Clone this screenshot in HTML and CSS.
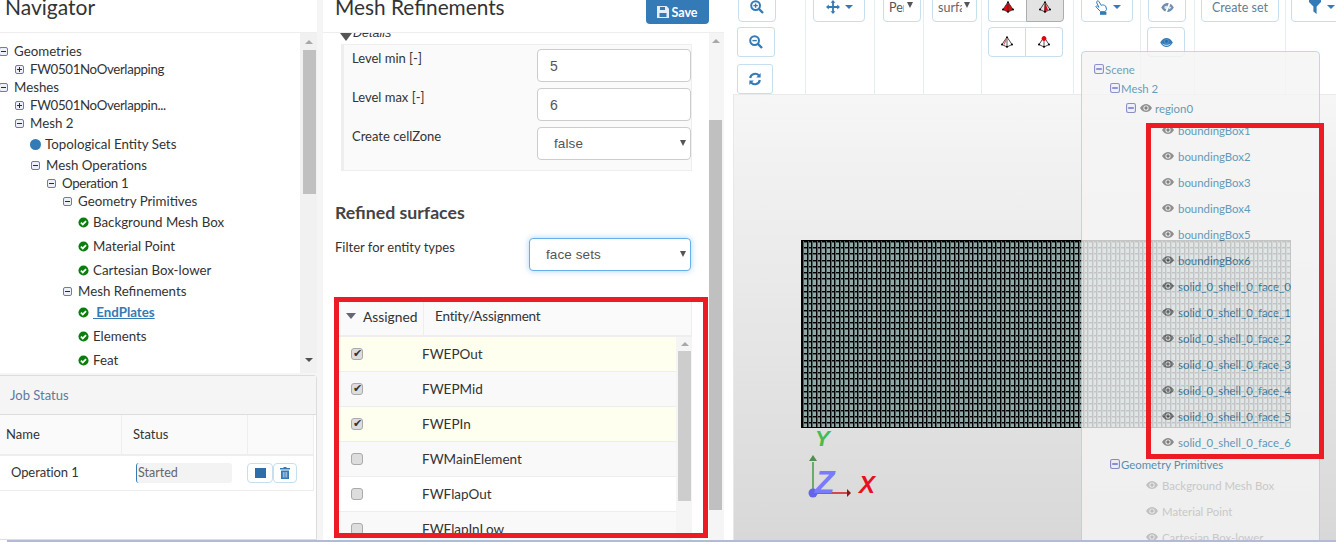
FILE: index.html
```html
<!DOCTYPE html>
<html lang="en">
<head>
<meta charset="utf-8">
<title>Mesh Refinements</title>
<link rel="stylesheet" href="styles.css">
</head>
<body>
<svg class="defs" width="0" height="0" aria-hidden="true">
  <symbol id="minus" viewBox="0 0 9 9"><rect x=".5" y=".5" width="8" height="8" rx="1.5" fill="#eef0f8" stroke="#6f77b8"/><path d="M2 4.5h5" stroke="#1a1ab0" stroke-width="1"/></symbol>
  <symbol id="plus" viewBox="0 0 9 9"><rect x=".5" y=".5" width="8" height="8" rx="1.5" fill="#eef0f8" stroke="#6f77b8"/><path d="M2 4.5h5M4.5 2v5" stroke="#1a1ab0" stroke-width="1"/></symbol>
  <symbol id="check" viewBox="0 0 12 12"><circle cx="6" cy="6" r="5.5" fill="#0a7d0a"/><path d="M3.2 6.1l2 2 3.6-3.6" fill="none" stroke="#fff" stroke-width="1.9"/></symbol>
  <symbol id="eye" viewBox="0 0 12 8"><path d="M0 4C2 1 4 0 6 0s4 1 6 4c-2 3-4 4-6 4S2 7 0 4z" fill="#777"/><circle cx="6" cy="4" r="2.6" fill="#f5f5f5"/><circle cx="6" cy="4" r="1.7" fill="#666"/></symbol>
  <symbol id="zoomin" viewBox="0 0 14 14"><circle cx="5.6" cy="5.6" r="4.4" fill="none" stroke="#337ab7" stroke-width="2"/><path d="M9 9l4 4" stroke="#337ab7" stroke-width="2.4"/><path d="M3.4 5.6h4.4M5.6 3.4v4.4" stroke="#337ab7" stroke-width="1.4"/></symbol>
  <symbol id="zoomout" viewBox="0 0 14 14"><circle cx="5.6" cy="5.6" r="4.4" fill="none" stroke="#337ab7" stroke-width="2"/><path d="M9 9l4 4" stroke="#337ab7" stroke-width="2.4"/><path d="M3.4 5.6h4.4" stroke="#337ab7" stroke-width="1.4"/></symbol>
  <symbol id="refresh" viewBox="0 0 14 14"><path d="M2.2 6A5 5 0 0 1 11 3.6" fill="none" stroke="#337ab7" stroke-width="2.2"/><path d="M12.6 1v4.4H8.2z" fill="#337ab7"/><path d="M11.8 8A5 5 0 0 1 3 10.4" fill="none" stroke="#337ab7" stroke-width="2.2"/><path d="M1.4 13V8.6h4.4z" fill="#337ab7"/></symbol>
  <symbol id="move" viewBox="0 0 14 14"><path d="M7 0l2.400 2.800H7.900v3.300h3.300V4.600L14 7l-2.800 2.400V7.900H7.900v3.300h1.500L7 14l-2.400-2.800h1.500V7.900H2.800v1.500L0 7l2.800-2.400v1.500h3.300V2.800H4.600z" fill="#337ab7"/></symbol>
  <symbol id="caret" viewBox="0 0 8 4"><path d="M0 0h8L4 4z" fill="#337ab7"/></symbol>
  <symbol id="hand" viewBox="0 0 14 15"><path d="M3 1.200c.8-.8 1.600-.3 2 .4l2.200 3.700c1.400-.7 3.300-.3 4.400.7l1 3.400-1.600 2.300H6.600L1.800 6.600c.4-.8 1.300-.7 2-.2L5 7.300 2.800 3c-.2-.6-.1-1.300.2-1.800z" fill="#fff" stroke="#337ab7" stroke-width="1"/><rect x="6" y="11.800" width="6.400" height="3" fill="#337ab7"/></symbol>
  <symbol id="eyeslash" viewBox="0 0 14 10"><path d="M0 5C2 1.500 4.500 0 7 0s5 1.500 7 5c-2 3.500-4.500 5-7 5S2 8.500 0 5z" fill="#6f8fb0"/><circle cx="5.500" cy="5" r="2" fill="#dfe7ef"/><path d="M10 -1L5 11" stroke="#fff" stroke-width="2"/><path d="M9 3.500c1 .3 1.700.8 2.300 1.500-.6.800-1.500 1.500-3 2z" fill="#dfe7ef"/></symbol>
  <symbol id="eyeblue" viewBox="0 0 14 10"><path d="M0 5C2 1.500 4.500 0 7 0s5 1.500 7 5c-2 3.500-4.500 5-7 5S2 8.500 0 5z" fill="#337ab7"/><path d="M1.600 5.200C3.200 7.600 5 8.700 7 8.700s3.800-1.100 5.400-3.500C11 7 9 7.400 7 7.400S3 7 1.600 5.200z" fill="#dbe7f1"/><circle cx="7" cy="3.800" r="2.800" fill="#4f8fc4"/><circle cx="7" cy="3.800" r="1.500" fill="#2a6aa2"/></symbol>
  <symbol id="filter" viewBox="0 0 12 14"><path d="M0 0h12v2L7.600 6.500V14L4.400 11.500v-5L0 2z" fill="#337ab7"/></symbol>
  <symbol id="save" viewBox="0 0 12 12"><path d="M0 0h9.500L12 2.500V12H0z" fill="#e4edf5"/><rect x="3" y="1" width="5" height="3" fill="#337ab7"/><rect x="2.500" y="7" width="7" height="4" fill="#337ab7"/></symbol>
  <symbol id="trash" viewBox="0 0 10 12"><path d="M3.500 0h3v1H10v1.500H0V1h3.500zM1 3.500h8V12H1z" fill="#337ab7"/><path d="M3.300 5v5.500M5 5v5.500M6.700 5v5.500" stroke="#cfdcea" stroke-width=".8"/></symbol>
  <symbol id="tet" viewBox="0 0 12 12"><path d="M6 1L1 8.500 6 11l5-2.500z" fill="none" stroke="#333" stroke-width=".9"/><path d="M6 1v10" stroke="#333" stroke-width=".8"/><circle cx="1" cy="8.500" r="1" fill="#000"/><circle cx="11" cy="8.500" r="1" fill="#000"/><circle cx="6" cy="10.800" r="1" fill="#000"/><circle cx="6" cy="1.200" r=".9" fill="#000"/></symbol>
</svg>

<div class="app">
  <aside class="left">
    <header class="head"><h1 class="nav-title">Navigator</h1></header>
    <div class="tree-wrap">
      <ul class="tree">
        <li class="row f lv0"><svg class="exp"><use href="#minus"/></svg>Geometries</li>
        <li class="row f lv1 tight"><svg class="exp"><use href="#plus"/></svg>FW0501NoOverlapping</li>
        <li class="row f lv0"><svg class="exp"><use href="#minus"/></svg>Meshes</li>
        <li class="row f lv1 tight"><svg class="exp"><use href="#plus"/></svg>FW0501NoOverlappin...</li>
        <li class="row f lv1"><svg class="exp"><use href="#minus"/></svg>Mesh 2</li>
        <li class="row i lv2"><span class="dot"></span>Topological Entity Sets</li>
        <li class="row f lv2"><svg class="exp"><use href="#minus"/></svg>Mesh Operations</li>
        <li class="row f lv3 tight"><svg class="exp"><use href="#minus"/></svg>Operation 1</li>
        <li class="row f lv4"><svg class="exp"><use href="#minus"/></svg>Geometry Primitives</li>
        <li class="row i lv5"><svg class="chk"><use href="#check"/></svg>Background Mesh Box</li>
        <li class="row i lv5"><svg class="chk"><use href="#check"/></svg>Material Point</li>
        <li class="row i lv5"><svg class="chk"><use href="#check"/></svg>Cartesian Box-lower</li>
        <li class="row f lv4"><svg class="exp"><use href="#minus"/></svg>Mesh Refinements</li>
        <li class="row i lv5"><svg class="chk"><use href="#check"/></svg><a class="cur" href="#">&nbsp;EndPlates</a></li>
        <li class="row i lv5"><svg class="chk"><use href="#check"/></svg>Elements</li>
        <li class="row i lv5"><svg class="chk"><use href="#check"/></svg>Feat</li>
      </ul>
      <div class="sb sb-tree">
        <span class="up"></span>
        <span class="thumb"></span>
        <span class="down"></span>
      </div>
    </div>
    <section class="job">
      <div class="job-head">Job Status</div>
      <div class="job-grid job-th">
        <div>Name</div><div>Status</div><div></div>
      </div>
      <div class="job-grid job-row">
        <div class="job-name">Operation 1</div>
        <div><span class="started">Started</span></div>
        <div class="job-btns">
          <button class="jb"><span class="stop"></span></button><button class="jb"><svg class="ic10"><use href="#trash"/></svg></button>
        </div>
      </div>
    </section>
  </aside>

  <main class="mid">
    <header class="head mid-head">
      <h2 class="mid-title">Mesh Refinements</h2>
      <button class="save"><svg class="ic12"><use href="#save"/></svg>Save</button>
    </header>
    <div class="mid-body">
      <div class="form">
        <div class="details"><span class="tri"></span><em>Details</em></div>
        <div class="fieldset">
          <div class="field"><label>Level min [-]</label><input class="ctl" value="5"></div>
          <div class="field"><label>Level max [-]</label><input class="ctl" value="6"></div>
          <div class="field"><label>Create cellZone</label><div class="ctl sel">false</div></div>
        </div>
        <h3 class="sub">Refined surfaces</h3>
        <div class="filter"><label>Filter for entity types</label><div class="ctl sel focus">face sets</div></div>
        <div class="tbl">
          <div class="thead">
            <div class="th1"><span class="sort"></span>Assigned</div>
            <div class="th2">Entity/Assignment</div>
          </div>
          <div class="tbody">
            <div class="rows">
              <div class="tr y"><span class="cb on"></span>FWEPOut</div>
              <div class="tr g"><span class="cb on"></span>FWEPMid</div>
              <div class="tr y"><span class="cb on"></span>FWEPIn</div>
              <div class="tr g"><span class="cb"></span>FWMainElement</div>
              <div class="tr"><span class="cb"></span>FWFlapOut</div>
              <div class="tr g"><span class="cb"></span>FWFlapInLow</div>
            </div>
            <div class="sb sb-tbl"><span class="up"></span><span class="thumb"></span></div>
          </div>
        </div>
      </div>
      <div class="sb sb-mid"><span class="up"></span><span class="thumb"></span></div>
    </div>
  </main>

  <section class="right">
    <div class="toolbar">
      <div class="grp g1">
        <button class="tb w38 top"><svg class="ic14"><use href="#zoomin"/></svg></button>
        <button class="tb w38"><svg class="ic14"><use href="#zoomout"/></svg></button>
        <button class="tb w36"><svg class="ic14"><use href="#refresh"/></svg></button>
      </div>
      <div class="grp g2"><button class="tb top wmove"><svg class="ic14"><use href="#move"/></svg><svg class="car"><use href="#caret"/></svg></button></div>
      <div class="grp g3"><button class="tb top wper"><span class="cut">Per</span><span class="dk"></span></button></div>
      <div class="grp g4"><button class="tb top wsurf"><span class="cut">surfa</span><span class="dk"></span></button></div>
      <div class="grp g5">
        <div class="seg top">
          <button class="tb sg"><svg class="ic12" viewBox="0 0 12 12"><path d="M6 1L1 8.500 6 11l5-2.500z" fill="#e8000d"/><use href="#tet" width="12" height="12"/></svg></button>
          <button class="tb sg act"><svg class="ic12" viewBox="0 0 12 12"><path d="M6 1l-1 10 4-2z" fill="#e8000d"/><use href="#tet" width="12" height="12"/></svg></button>
        </div>
        <div class="seg">
          <button class="tb sg"><svg class="ic12" viewBox="0 0 12 12"><use href="#tet" width="12" height="12"/><path d="M5.500 3L3 8.500" stroke="#e8606a" stroke-width="1.200"/></svg></button>
          <button class="tb sg"><svg class="ic12" viewBox="0 0 12 12"><use href="#tet" width="12" height="12"/><circle cx="6" cy="2.600" r="2.400" fill="#e8000d"/></svg></button>
        </div>
      </div>
      <div class="grp g6"><button class="tb top whand"><svg class="ic15"><use href="#hand"/></svg><svg class="car"><use href="#caret"/></svg></button></div>
      <div class="grp g7">
        <button class="tb w38 top"><svg class="ic14e"><use href="#eyeslash"/></svg></button>
        <button class="tb w38"><svg class="ic14e"><use href="#eyeblue"/></svg></button>
      </div>
      <div class="grp g8"><button class="tb top wcreate">Create set</button></div>
      <div class="grp g9"><button class="tb top wfilter"><svg class="ic14"><use href="#filter"/></svg><svg class="car"><use href="#caret"/></svg></button></div>
    </div>
    <div class="view">
      <div class="mesh"></div>
      <svg class="axes" viewBox="0 0 80 72" width="80" height="72">
        <text class="ax" x="15" y="18" fill="#45bb50" font-size="22">Y</text>
        <path d="M13 65V34" stroke="#4aa04a" stroke-width="1.600"/><path d="M13 27l4 6h-8z" fill="#4f8f4f"/>
        <path d="M13 65h34" stroke="#d01818" stroke-width="1.600"/><path d="M51 65l-4-4v8z" fill="#8a1a1a"/>
        <text class="ax" x="59" y="65" fill="#e8101c" font-size="24">X</text>
        <circle cx="13" cy="65" r="4.500" fill="#6464e6"/>
        <text class="ax" x="15" y="65" fill="#7a7aff" font-size="32">Z</text>
      </svg>
    </div>
    <div class="scene">
      <div class="s t0"><svg class="sx"><use href="#minus"/></svg>Scene</div>
      <div class="s t1"><svg class="sx"><use href="#minus"/></svg>Mesh 2</div>
      <div class="s t2"><svg class="sx"><use href="#minus"/></svg><svg class="se"><use href="#eye"/></svg>region0</div>
      <div class="s rw first"><svg class="se"><use href="#eye"/></svg>boundingBox1</div>
      <div class="s rw"><svg class="se"><use href="#eye"/></svg>boundingBox2</div>
      <div class="s rw"><svg class="se"><use href="#eye"/></svg>boundingBox3</div>
      <div class="s rw"><svg class="se"><use href="#eye"/></svg>boundingBox4</div>
      <div class="s rw"><svg class="se"><use href="#eye"/></svg>boundingBox5</div>
      <div class="s rw"><svg class="se"><use href="#eye"/></svg>boundingBox6</div>
      <div class="s rw"><svg class="se"><use href="#eye"/></svg>solid_0_shell_0_face_0</div>
      <div class="s rw"><svg class="se"><use href="#eye"/></svg>solid_0_shell_0_face_1</div>
      <div class="s rw"><svg class="se"><use href="#eye"/></svg>solid_0_shell_0_face_2</div>
      <div class="s rw"><svg class="se"><use href="#eye"/></svg>solid_0_shell_0_face_3</div>
      <div class="s rw"><svg class="se"><use href="#eye"/></svg>solid_0_shell_0_face_4</div>
      <div class="s rw"><svg class="se"><use href="#eye"/></svg>solid_0_shell_0_face_5</div>
      <div class="s rw"><svg class="se"><use href="#eye"/></svg>solid_0_shell_0_face_6</div>
      <div class="s t1 gp"><svg class="sx"><use href="#minus"/></svg>Geometry Primitives</div>
      <div class="s dis"><svg class="se"><use href="#eye"/></svg>Background Mesh Box</div>
      <div class="s dis"><svg class="se"><use href="#eye"/></svg>Material Point</div>
      <div class="s dis"><svg class="se"><use href="#eye"/></svg>Cartesian Box-lower</div>
    </div>
  </section>
</div>
<div class="mark mark-a"></div>
<div class="mark mark-b"></div>
<div class="foot"></div>
</body>
</html>
```

FILE: styles.css
```css
* { box-sizing: border-box; }
html, body { margin: 0; height: 542px; overflow: hidden; background: #fff; }
body { font-family: Lato, "Liberation Sans", sans-serif; font-size: 13px; color: #333; position: relative; }
.defs { position: absolute; }
button { font: inherit; padding: 0; background: #fff; cursor: pointer; }
ul { list-style: none; margin: 0; padding: 0; }

.app { display: flex; height: 540px; }
.head { height: 33px; border-bottom: 1px solid #eee; overflow: hidden; position: relative; }

/* left column */
.left { width: 323px; flex: none; display: flex; flex-direction: column; background: #f5f5f5; }
.left .head { width: 317px; background: #fff; flex: none; }
.nav-title { margin: -11px 0 0 5px; font-size: 21px; font-weight: 400; line-height: 36px; }
.tree-wrap { display: flex; width: 317px; height: 340px; background: #fff; flex: none; overflow: hidden; }
.tree { flex: 1; padding-top: 9px; margin-left: -1px; font-size: 13.300px; }
.row { display: flex; align-items: center; white-space: nowrap; }
.row.f { height: 18px; }
.row.i { height: 24px; }
.tight { letter-spacing: -.36px; }
.lv0 { padding-left: 0; } .lv1 { padding-left: 16px; } .lv2 { padding-left: 32px; }
.lv3 { padding-left: 48px; } .lv4 { padding-left: 64px; } .lv5 { padding-left: 80px; }
.exp { width: 9px; height: 9px; margin-right: 6px; flex: none; }
.dot { width: 11px; height: 11px; border-radius: 50%; background: #337ab7; margin: 0 4px 0 -1px; flex: none; }
.chk { width: 11px; height: 11px; margin: 0 4px 0 -1px; flex: none; }
.cur { color: #337ab7; font-weight: 700; text-decoration: underline; }

.sb { flex: none; display: flex; flex-direction: column; align-items: center; background: #f1f1f1; }
.up { width: 0; height: 0; border: 4px solid transparent; border-top: 0; border-bottom: 4px solid #a8a8a8; }
.down { width: 0; height: 0; border: 4px solid transparent; border-bottom: 0; border-top: 4px solid #505050; }
.thumb { display: block; background: #c0c0c0; }
.sb-tree { width: 17px; height: 340px; padding: 7px 0 0 1px; }
.sb-tree .thumb { width: 13px; height: 144px; margin-top: 6px; }
.sb-tree .down { margin-top: 164px; }

.job { margin: 2px 6px 0 0; flex: 1; width: 317px; background: #fff; border: 1px solid #ddd; border-left: 0; border-radius: 0 4px 0 0; font-size: 13px; }
.job-head { height: 39px; line-height: 38px; padding-left: 10px; background: #f5f5f5; border-bottom: 1px solid #ddd; color: #5b7a9e; }
.job-grid { display: grid; grid-template-columns: 121px 126px 67px; width: 314px; }
.job-th { height: 41px; background: #fafafa; border-bottom: 2px solid #eee; border-right: 1px solid #eee; }
.job-th > div { padding: 10px 0 0 6px; line-height: 18px; }
.job-th > div + div { padding-left: 11px; border-left: 1px solid #eee; }
.job-row { height: 35px; border-bottom: 1px solid #eee; border-right: 1px solid #eee; align-items: center; }
.job-name { padding: 0 0 2px 11px; letter-spacing: -.1px; }
.started { display: block; margin-left: 15px; width: 96px; height: 20px; line-height: 20px; background: #f3f3f3; border-radius: 3px; border-left: 1px solid #337ab7; font-size: 12.500px; color: #666; padding-left: 1px; }
.job-btns { display: flex; }
.jb { width: 26px; height: 20px; border: 1px solid #c5dfec; border-radius: 4px; display: flex; align-items: center; justify-content: center; }
.jb + .jb { width: 24px; }
.stop { width: 11px; height: 10px; background: #2f6da8; display: block; }
.ic10 { width: 10px; height: 12px; }

/* middle column */
.mid { width: 410px; flex: none; display: flex; flex-direction: column; }
.mid-head { width: 401px; display: flex; justify-content: space-between; padding: 0 15px 0 12px; }
.mid-title { margin: -11px 0 0; font-size: 20.800px; font-weight: 400; line-height: 36px; }
.save { height: 24px; width: 63px; border: 0; background: #337ab7; color: #fff; border-radius: 0 0 4px 4px; font-size: 12.500px; font-weight: 700; display: flex; align-items: center; justify-content: center; gap: 2px; }
.ic12 { width: 12px; height: 12px; }
.mid-body { display: flex; height: 507px; overflow: hidden; width: 401px; }
.form { width: 386px; flex: none; padding: 0 18px 0 12px; overflow: hidden; }
.details { height: 11px; margin-left: 5px; display: flex; align-items: flex-start; overflow: hidden; line-height: 0; }
.details em { display: block; line-height: 12px; margin-top: -6px; margin-left: 1px; font-family: "Liberation Sans", sans-serif; font-size: 12.500px; }
.tri { width: 0; height: 0; border: 6px solid transparent; border-bottom: 0; border-top: 8px solid #555; }
.fieldset { margin-left: 6px; width: 351px; height: 127px; padding: 4px 0 0 8px; background: #fafafa; border: 1px solid #eee; border-left-width: 3px; }
.field { display: flex; justify-content: space-between; height: 33px; margin-bottom: 6px; }
.field label { line-height: 18px; }
.ctl { display: block; width: 154px; height: 33px; border: 1px solid #ccc; border-radius: 4px; background: #fff; font-size: 14px; color: #555; padding: 0 12px; line-height: 31px; outline: 0; }
input.ctl { font-family: "Liberation Sans", sans-serif; }
.sel { position: relative; padding-left: 16px; font-family: "Liberation Sans", sans-serif; letter-spacing: .1px; font-size: 13.500px; }
.sel::after { content: ""; position: absolute; right: 4px; top: 12px; border: 3px solid transparent; border-bottom: 0; border-top: 6px solid #555; }
.sel.focus { border-color: #66afe9; box-shadow: 0 0 6px rgba(102,175,233,.55); width: 162px; }
.sub { margin: 31px 0 0; font-size: 17.700px; font-weight: 700; line-height: 22px; color: #444; }
.filter { display: flex; justify-content: space-between; margin-top: 14px; height: 33px; }
.filter label { line-height: 18px; }
.tbl { margin: 30px 0 0 4px; width: 353px; font-size: 13.500px; }
.thead { display: flex; height: 36px; background: #fafafa; border-bottom: 2px solid #eee; border-right: 1px solid #eee; }
.th1 { width: 85px; display: flex; align-items: center; padding: 0 0 4px 7px; border-right: 1px solid #eee; white-space: nowrap; font-size: 13.800px; }
.sort { width: 0; height: 0; border: 5px solid transparent; border-bottom: 0; border-top: 6px solid #667; margin-right: 7px; }
.th2 { padding-left: 11px; line-height: 30px; letter-spacing: -.2px; }
.tbody { display: flex; }
.rows { width: 337px; flex: none; }
.tr { height: 35px; display: flex; align-items: center; border-bottom: 1px solid #eee; padding-left: 12px; background: #fff; }
.tr.y { background: #fffff0; }
.tr.g { background: #f9f9f9; }
.cb { width: 12px; height: 12px; margin-right: 59px; border: 1px solid #aaa; border-radius: 3px; background: #ddd; position: relative; flex: none; }
.cb.on::after { content: "\2714"; position: absolute; left: 1px; top: -2px; font: 11px/14px "DejaVu Sans", sans-serif; color: #333; }
.sb-tbl { width: 16px; background: #f5f5f5; padding: 5px 0 0 1px; height: 210px; }
.sb-tbl .thumb { width: 13px; height: 150px; margin-top: 5px; background: #cdcdcd; }
.sb-mid { width: 15px; padding: 6px 2px 0 0; background: #f5f5f5; }
.sb-mid .thumb { width: 13px; height: 390px; margin-top: 77px; }

/* right column */
.right { flex: 1; position: relative; display: flex; flex-direction: column; min-width: 0; }
.toolbar { display: flex; height: 95px; flex: none; border-bottom: 1px solid #eaeaea; overflow: hidden; }
.grp { border-right: 1px solid #e4eef3; display: flex; flex-direction: column; align-items: flex-start; gap: 5px; flex: none; height: 94px; }
.g1 { width: 73px; padding-left: 4px; }
.g2 { width: 69px; padding-left: 7px; }
.g3 { width: 49px; padding-left: 8px; }
.g4 { width: 58px; padding-left: 8px; }
.g5 { width: 92px; padding-left: 6px; }
.g6 { width: 67px; padding-left: 7px; }
.g7 { width: 54px; padding-left: 6px; }
.g8 { width: 91px; padding-left: 6px; }
.g9 { width: 50px; padding-left: 5px; border-right: 0; }
.tb { display: flex; align-items: center; justify-content: center; height: 30px; border: 1px solid #c5dfec; border-radius: 0 0 4px 4px; color: #555; font-size: 12.500px; gap: 5px; background: #fff; flex: none; }
.top { margin-top: -8px; }
.g1 .tb + .tb { border-radius: 3px; }
.g1 .top { margin-left: 1px; }
.g7 .top { margin-left: 1px; }
.g7 .tb + .tb { border-radius: 4px; }
.g1 .tb:nth-child(3) { margin-top: 2px; }
.w38 { width: 38px; }
.w36 { width: 36px; }
.wmove { width: 52px; }
.cut { display: block; overflow: hidden; white-space: nowrap; }
.wper { width: 38px; justify-content: flex-start; padding-left: 5px; gap: 3px; }
.wper .cut { width: 15px; }
.wsurf { width: 45px; justify-content: flex-start; padding-left: 5px; gap: 2px; }
.wsurf .cut { width: 24px; color: #666; }
.dk { border: 3px solid transparent; border-bottom: 0; border-top: 6px solid #555; margin-top: -4px; }
.whand { width: 52px; }
.wcreate { width: 78px; color: #5f7f95; }
.wfilter { width: 60px; }
.ic14 { width: 14px; height: 14px; }
.ic14e { width: 13px; height: 9px; }
.ic15 { width: 14px; height: 15px; }
.car { width: 8px; height: 4px; }
.seg { display: flex; }
.sg { width: 38px; border-radius: 0; }
.seg .sg:first-child { border-radius: 0 0 0 4px; border-right: 0; }
.seg .sg:last-child { border-radius: 0 0 4px 0; }
.seg + .seg .sg:first-child { border-radius: 4px 0 0 4px; border-right: 1px solid #c5dfec; }
.seg + .seg .sg:last-child { border-radius: 0 4px 4px 0; border-left: 0; width: 37px; }
.act { background: #e3e3e3; border-color: #adadad; }

.view { flex: 1; position: relative; background: linear-gradient(#f6f6f6, #d8d8d8); border-left: 1px solid #e8e8e8; }
.mesh { position: absolute; left: 67px; top: 145px; width: 490px; height: 188px; background-color: #90a8a8; border: 1px solid #000;
  background-size: 23px 25px;
  background-image:
    linear-gradient(90deg, #000 0 1px, #50605f 1px 2px, transparent 2px 5px, #000 5px 6px, #50605f 6px 7px, transparent 7px 9px, #000 9px 10px, #50605f 10px 11px, transparent 11px 14px, #000 14px 15px, #50605f 15px 16px, transparent 16px 18px, #000 18px 19px, #50605f 19px 20px, transparent 20px 23px),
    linear-gradient(180deg, #000 0 1px, #50605f 1px 2px, transparent 2px 6px, #000 6px 7px, #50605f 7px 8px, transparent 8px 12px, #000 12px 13px, #50605f 13px 14px, transparent 14px 19px, #000 19px 20px, #50605f 20px 21px, transparent 21px 25px); }
.axes { position: absolute; left: 66px; top: 333px; overflow: visible; }
.ax { font-family: "Liberation Sans", sans-serif; font-weight: 700; font-style: italic; }

.scene { position: absolute; left: 348px; top: 51px; width: 239px; height: 495px; background: #f5f5f5; border: 1px solid #a9d3e6; border-radius: 4px; opacity: .8; font-size: 11.400px; color: #3f86ab; padding-top: 8px; }
.s { display: flex; align-items: center; white-space: nowrap; height: 26px; padding-left: 80px; }
.sx { width: 10px; height: 10px; margin-right: 1px; flex: none; }
.se { width: 12px; height: 8px; margin-right: 4px; flex: none; }
.t0 { height: 18px; padding-left: 12px; color: #4f87a5; }
.t1 { height: 20px; padding-left: 28px; }
.t2 { height: 20px; padding-left: 44px; }
.t2 .sx { margin-right: 4px; }
.t2 .se { margin-right: 3px; }
.first { margin-top: -1px; }
.gp { margin-top: -2px; height: 22px; color: #3a7b9e; }
.dis { color: #c4c4c4; padding-left: 64px; height: 26px; margin-top: -3px; }
.dis + .dis { margin-top: 0; }
.dis .se { opacity: .45; }

.mark { position: absolute; border: 5px solid #ed1c24; pointer-events: none; }
.mark-a { left: 334px; top: 297px; width: 374px; height: 241px; }
.mark-b { left: 1146px; top: 123px; width: 178px; height: 336px; }
.foot { position: absolute; left: 7px; right: 0; top: 540px; height: 2px; background: #b0bcd4; }
```
